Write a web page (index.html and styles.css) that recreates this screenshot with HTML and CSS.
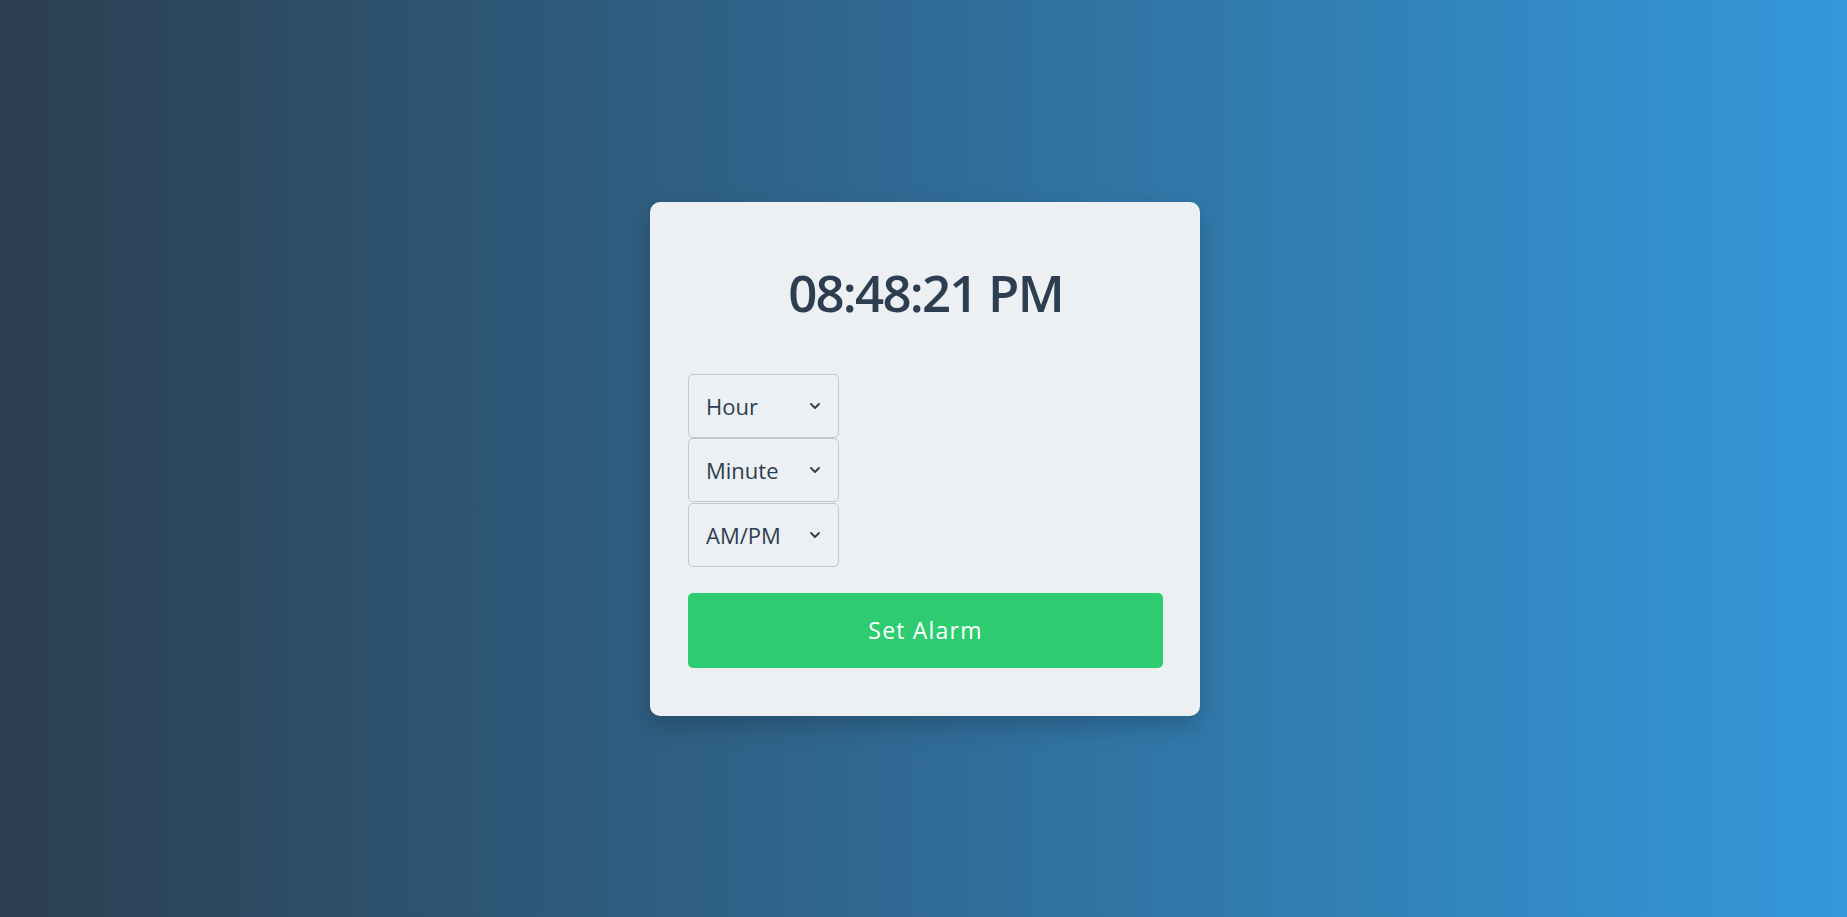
FILE: index.html
```html
<!DOCTYPE html>
<html lang="en">
<head>
<meta charset="utf-8">
<title>Alarm Clock</title>
<link rel="stylesheet" href="styles.css">
</head>
<body>
<main class="card">
  <div class="time">08:48:21 PM</div>
  <div class="pickers">
    <select class="picker"><option>Hour</option></select>
    <select class="picker"><option>Minute</option></select>
    <select class="picker"><option>AM/PM</option></select>
  </div>
  <button class="set-btn">Set Alarm</button>
</main>
</body>
</html>
```

FILE: styles.css
```css
* { box-sizing: border-box; }
html, body { margin: 0; height: 100%; }
body {
  font-family: "Open Sans", "Liberation Sans", sans-serif;
  background: linear-gradient(to right, #2c3e50, #3498db);
  display: flex;
  align-items: center;
  justify-content: center;
  color: #2c3e50;
}
.card {
  width: 550px;
  margin-left: 3px;
  background: #ecf0f3;
  border-radius: 10px;
  padding: 55px 37px 48px 38px;
  box-shadow: 0 10px 25px rgba(0, 0, 0, 0.2);
  display: flex;
  flex-direction: column;
}
.time {
  font-size: 51px;
  font-weight: 600;
  line-height: 70px;
  text-align: center;
  letter-spacing: -1.8px;
  margin-bottom: 47px;
}
.pickers {
  display: flex;
  flex-direction: column;
  align-items: flex-start;
  gap: 0.5px;
}
.picker {
  -webkit-appearance: none;
  appearance: none;
  width: 151px;
  height: 64px;
  padding: 0 30px 0 17px;
  font-family: inherit;
  font-size: 22px;
  color: #2c3e50;
  background-color: transparent;
  background-image: url("data:image/svg+xml,%3Csvg xmlns='http://www.w3.org/2000/svg' width='10' height='6' viewBox='0 0 10 6'%3E%3Cpath d='M1 1l4 4 4-4' fill='none' stroke='%232c3e50' stroke-width='1.8' stroke-linecap='round' stroke-linejoin='round'/%3E%3C/svg%3E");
  background-repeat: no-repeat;
  background-position: right 18px center;
  background-size: 10px 6px;
  border: 1px solid #c4c7c9;
  border-radius: 5px;
}
.set-btn {
  margin-top: 26px;
  height: 75px;
  border: none;
  border-radius: 5px;
  background: #2ecc71;
  color: #fff;
  font-family: inherit;
  font-size: 23px;
  letter-spacing: 1.2px;
}
```
